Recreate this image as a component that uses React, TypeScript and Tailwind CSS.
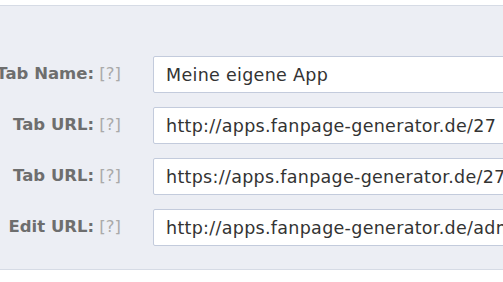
const rows = [
  { label: 'Tab Name:', value: 'Meine eigene App' },
  { label: 'Tab URL:', value: 'http://apps.fanpage-generator.de/27' },
  { label: 'Tab URL:', value: 'https://apps.fanpage-generator.de/27' },
  { label: 'Edit URL:', value: 'http://apps.fanpage-generator.de/admin' },
];

export default function App() {
  return (
    <div className="w-[503px] h-[282px] overflow-hidden bg-white pt-[5px] font-['DejaVu_Sans',sans-serif]">
      <div className="border-y border-[#d6dbe5] bg-[#eceef4] pt-[50px] pb-[23px]">
        <div className="flex flex-col gap-[14px]">
          {rows.map((row, i) => (
            <div key={i} className="flex items-center">
              {/* label column, right aligned; long labels spill off to the left */}
              <div className="flex w-[121px] shrink-0 justify-end text-[16.5px]">
                <span className="shrink-0 whitespace-nowrap">
                  <span className="font-bold text-[#6e6e6e]">{row.label}</span>{' '}
                  <span className="text-[#a9a9a9]">[?]</span>
                </span>
              </div>
              <input
                readOnly
                value={row.value}
                className="ml-[32px] h-[37px] w-[420px] shrink-0 rounded-[2px] border border-[#c3cbdc] bg-white px-[12px] text-[17.5px] tracking-[0.3px] text-[#333] outline-none font-['DejaVu_Sans',sans-serif]"
              />
            </div>
          ))}
        </div>
      </div>
    </div>
  );
}
